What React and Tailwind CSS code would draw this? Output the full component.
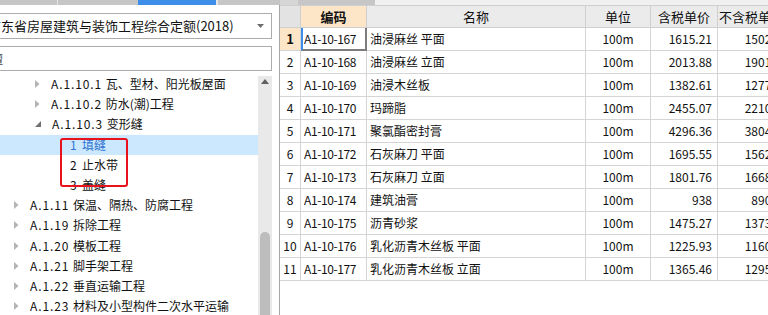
import React from "react";

const FONT = { fontFamily: '"Noto Sans CJK SC", "Noto Sans", sans-serif' };

const treeRows = [
  { lvl: 3, arrow: "right", code: "A.1.10.1", name: "瓦、型材、阳光板屋面" },
  { lvl: 3, arrow: "right", code: "A.1.10.2", name: "防水(潮)工程" },
  { lvl: 3, arrow: "down", code: "A.1.10.3", name: "变形缝" },
  { lvl: 4, code: "1", name: "填缝", selected: true },
  { lvl: 4, code: "2", name: "止水带" },
  { lvl: 4, code: "3", name: "盖缝" },
  { lvl: 2, arrow: "right", code: "A.1.11", name: "保温、隔热、防腐工程" },
  { lvl: 2, arrow: "right", code: "A.1.19", name: "拆除工程" },
  { lvl: 2, arrow: "right", code: "A.1.20", name: "模板工程" },
  { lvl: 2, arrow: "right", code: "A.1.21", name: "脚手架工程" },
  { lvl: 2, arrow: "right", code: "A.1.22", name: "垂直运输工程" },
  { lvl: 2, arrow: "right", code: "A.1.23", name: "材料及小型构件二次水平运输" },
];

const gridRows = [
  ["A1-10-167", "油浸麻丝 平面", "1615.21", "1502.52"],
  ["A1-10-168", "油浸麻丝 立面", "2013.88", "1901.37"],
  ["A1-10-169", "油浸木丝板", "1382.61", "1277.46"],
  ["A1-10-170", "玛蹄脂", "2455.07", "2210.18"],
  ["A1-10-171", "聚氯酯密封膏", "4296.36", "3804.75"],
  ["A1-10-172", "石灰麻刀 平面", "1695.55", "1562.73"],
  ["A1-10-173", "石灰麻刀 立面", "1801.76", "1668.29"],
  ["A1-10-174", "建筑油膏", "938", "890.51"],
  ["A1-10-175", "沥青砂浆", "1475.27", "1373.64"],
  ["A1-10-176", "乳化沥青木丝板 平面", "1225.93", "1160.19"],
  ["A1-10-177", "乳化沥青木丝板 立面", "1365.46", "1295.62"],
];

function RightArrow() {
  return (
    <svg width="5" height="8" viewBox="0 0 5 8" className="shrink-0">
      <path d="M0 0 L4.5 4 L0 8 Z" fill="#b4b4b4" />
    </svg>
  );
}

function DownArrow() {
  return (
    <svg width="6" height="6" viewBox="0 0 6 6" className="shrink-0">
      <path d="M6 0 L6 6 L0 6 Z" fill="#707070" />
    </svg>
  );
}

function TreeRow({ row }) {
  const indent = { 2: "pl-[14px]", 3: "pl-[35px]", 4: "pl-[70px]" }[row.lvl];
  return (
    <div
      className={`h-[20.2px] flex items-center ${indent} ${row.selected ? "bg-[#cce8ff] text-[#2f74d0]" : "text-[#111]"}`}
    >
      {row.lvl === 4 ? (
        <span className="text-[12px] whitespace-pre">
          {row.code}
          {"  "}
          {row.name}
        </span>
      ) : (
        <>
          {row.arrow === "down" ? <DownArrow /> : <RightArrow />}
          <span className="ml-[11px] text-[12px] whitespace-pre">
            <span className="tracking-[0.9px]">{row.code} </span>
            {row.name}
          </span>
        </>
      )}
    </div>
  );
}

export default function App() {
  return (
    <div className="w-[768px] h-[315px] overflow-hidden bg-white flex flex-col" style={FONT}>
      {/* top tab strip */}
      <div className="h-[5px] flex shrink-0 bg-[#f0f0f0]">
        <div className="w-[57px] bg-[#c6c6c6]" />
        <div className="w-[1px] bg-[#e6e6e6]" />
        <div className="w-[80px] bg-[#c6c6c6]" />
        <div className="w-[78px] bg-[#3c8ee8]" />
        <div className="w-[2px] bg-[#e6e6e6]" />
        <div className="w-[62px] bg-[#c6c6c6]" />
        <div className="w-[18px] bg-[#d6d6d6]" />
        <div className="w-[77px] bg-[#c6c6c6]" />
      </div>

      <div className="flex flex-1 min-h-0">
        {/* left panel */}
        <div className="w-[272px] shrink-0 flex flex-col overflow-hidden relative">
          <div className="mt-[8px] h-[26px] -ml-[20px] border border-[#acacac] flex items-center pl-[7px] pr-[6px] shrink-0">
            <span className="text-[13px] text-[#111] flex-1 whitespace-nowrap">
              广东省房屋建筑与装饰工程综合定额(2018)
            </span>
            <svg width="7" height="4" viewBox="0 0 7 4" className="mr-[1px]">
              <path d="M0 0 L7 0 L3.5 4 Z" fill="#6e6e6e" />
            </svg>
          </div>
          <div className="mt-[7px] h-[25px] -ml-[20px] border border-[#acacac] flex items-center pl-[10px] shrink-0">
            <span className="text-[12px] text-[#444]">擅</span>
          </div>
          <div className="flex flex-1 min-h-0 mt-[3px]">
            <div className="flex-1 relative">
              {treeRows.map((r, i) => (
                <TreeRow key={i} row={r} />
              ))}
              <div className="absolute left-[60px] top-[64px] w-[68px] h-[49px] border-2 border-[#e8121c] rounded-[3px]" />
            </div>
            <div className="w-[14px] mt-[2px] bg-[#e9e9e9] flex flex-col items-center">
              <svg width="8" height="5" viewBox="0 0 8 5" className="mt-[3px]">
                <path d="M0 5 L4 0 L8 5 Z" fill="#606060" />
              </svg>
              <div className="flex-1" />
              <div className="w-[10px] h-[83px] bg-[#bdbdbd] rounded-t-[5px]" />
            </div>
          </div>
        </div>

        {/* grid */}
        <div className="ml-[7px] flex-1 min-w-0 overflow-hidden border-l border-[#a6a6a6] relative">
          <div className="grid grid-cols-[21px_66px_219px_65px_67px_80px] w-[518px] text-[12px] text-[#111]">
            {/* header */}
            <div className="h-[23px] bg-[#e3e3e3] border-t border-r border-b border-[#cfcfcf]" />
            <div className="h-[23px] bg-[#fde6c8] border-t border-r border-b border-[#cfcfcf] flex items-center justify-center font-bold text-[13px]">
              编码
            </div>
            <div className="h-[23px] bg-[#ebebeb] border-t border-r border-b border-[#cfcfcf] flex items-center justify-center text-[13px]">
              名称
            </div>
            <div className="h-[23px] bg-[#ebebeb] border-t border-r border-b border-[#cfcfcf] flex items-center justify-center text-[13px]">
              单位
            </div>
            <div className="h-[23px] bg-[#ebebeb] border-t border-r border-b border-[#cfcfcf] flex items-center justify-center text-[13px]">
              含税单价
            </div>
            <div className="h-[23px] bg-[#ebebeb] border-t border-r border-b border-[#cfcfcf] flex items-center pl-[1px] text-[13px] whitespace-nowrap">
              不含税单价
            </div>

            {gridRows.map((r, i) => {
              const first = i === 0;
              return (
                <React.Fragment key={i}>
                  <div
                    className={`h-[23px] border-r border-b border-[#d4d4d4] flex items-center justify-center ${first ? "bg-[#fde6c8] font-bold text-[13px]" : "bg-white text-[12px]"}`}
                  >
                    {i + 1}
                  </div>
                  <div
                    className={`h-[23px] flex items-center whitespace-nowrap tracking-[-0.4px] ${first ? "border-l-2 border-l-[#3c8ee8] border-r-2 border-r-[#7c7c7c] border-b-2 border-b-[#7c7c7c] pl-[1px]" : "border-r border-b border-[#d4d4d4] pl-[3px]"}`}
                  >
                    {r[0]}
                  </div>
                  <div className="h-[23px] border-r border-b border-[#d4d4d4] flex items-center pl-[3px] whitespace-pre">
                    {r[1]}
                  </div>
                  <div className="h-[23px] border-r border-b border-[#d4d4d4] flex items-center justify-center">
                    100m
                  </div>
                  <div className="h-[23px] border-r border-b border-[#d4d4d4] flex items-center justify-end pr-[5px]">
                    {r[2]}
                  </div>
                  <div className="h-[23px] border-r border-b border-[#d4d4d4] flex items-center justify-end pr-[9px]">
                    {r[3]}
                  </div>
                </React.Fragment>
              );
            })}
          </div>
        </div>
      </div>
    </div>
  );
}
